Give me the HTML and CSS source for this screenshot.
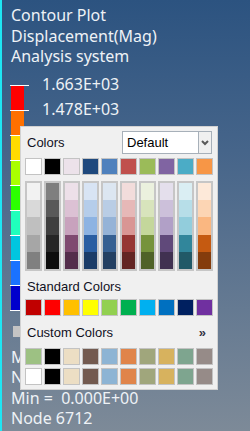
FILE: index.html
```html
<!DOCTYPE html>
<html>
<head>
<meta charset="utf-8">
<link rel="stylesheet" href="styles.css">
</head>
<body>
<div class="view">
  <div class="title">Contour Plot<br>Displacement(Mag)<br>Analysis system</div>
  <div class="legend">
    <div class="bar">
      <div class="seg"><i class="l1"></i></div>
      <div class="seg"><i class="l2"></i></div>
      <div class="seg"><i class="l3"></i></div>
      <div class="seg"><i class="l4"></i></div>
      <div class="seg"><i class="l5"></i></div>
      <div class="seg"><i class="l6"></i></div>
      <div class="seg"><i class="l7"></i></div>
      <div class="seg"><i class="l8"></i></div>
      <div class="seg"><i class="l9"></i></div>
    </div>
    <div class="labels">
      <div>1.663E+03</div>
      <div>1.478E+03</div>
      <div>1.294E+03</div>
      <div>1.109E+03</div>
      <div>9.240E+02</div>
      <div>7.392E+02</div>
      <div>5.544E+02</div>
      <div>3.696E+02</div>
      <div>1.848E+02</div>
      <div>0.000E+00</div>
    </div>
  </div>
  <div class="nores"></div>
  <div class="stats">
    <div>Max =  1.663E+03</div>
    <div>Node 1184</div>
    <div>Min =  0.000E+00</div>
    <div>Node 6712</div>
  </div>
</div>

<div class="popup">
  <div class="head">
    <span class="lbl">Colors</span>
    <div class="combo">
      <span class="val">Default</span>
      <span class="btn"><svg width="8" height="6" viewBox="0 0 8 6"><polyline points="1,1 4,4 7,1" fill="none" stroke="#5a5a5a" stroke-width="2"/></svg></span>
    </div>
  </div>
  <div class="row theme">
    <span class="sw" style="background:#ffffff"></span>
    <span class="sw" style="background:#000000"></span>
    <span class="sw" style="background:#ece2ea"></span>
    <span class="sw" style="background:#1f497d"></span>
    <span class="sw" style="background:#4f81bd"></span>
    <span class="sw" style="background:#c0504d"></span>
    <span class="sw" style="background:#9bbb59"></span>
    <span class="sw" style="background:#8064a2"></span>
    <span class="sw" style="background:#4bacc6"></span>
    <span class="sw" style="background:#f79646"></span>
  </div>
  <div class="row shades">
    <div class="col"><b style="background:#f2f2f2"></b><b style="background:#d9d9d9"></b><b style="background:#bfbfbf"></b><b style="background:#a6a6a6"></b><b style="background:#808080"></b></div>
    <div class="col"><b style="background:#7f7f7f"></b><b style="background:#595959"></b><b style="background:#3f3f3f"></b><b style="background:#262626"></b><b style="background:#0d0d0d"></b></div>
    <div class="col"><b style="background:#ede0e9"></b><b style="background:#dcc1d4"></b><b style="background:#c8a2bd"></b><b style="background:#7f4a70"></b><b style="background:#542d4b"></b></div>
    <div class="col"><b style="background:#d8e4f4"></b><b style="background:#b5cdea"></b><b style="background:#8db3e2"></b><b style="background:#2a5ea2"></b><b style="background:#1b3c68"></b></div>
    <div class="col"><b style="background:#dce6f1"></b><b style="background:#b9cde5"></b><b style="background:#95b3d7"></b><b style="background:#366092"></b><b style="background:#244062"></b></div>
    <div class="col"><b style="background:#f2dcdb"></b><b style="background:#e6b8b7"></b><b style="background:#d99694"></b><b style="background:#963634"></b><b style="background:#632523"></b></div>
    <div class="col"><b style="background:#ebf1de"></b><b style="background:#d8e4bc"></b><b style="background:#c4d79b"></b><b style="background:#76933c"></b><b style="background:#4f6228"></b></div>
    <div class="col"><b style="background:#e4dfec"></b><b style="background:#ccc0da"></b><b style="background:#b1a0c7"></b><b style="background:#60497a"></b><b style="background:#403151"></b></div>
    <div class="col"><b style="background:#daeef3"></b><b style="background:#b7dee8"></b><b style="background:#92cddc"></b><b style="background:#31869b"></b><b style="background:#215967"></b></div>
    <div class="col"><b style="background:#fde9d9"></b><b style="background:#fcd5b4"></b><b style="background:#fab781"></b><b style="background:#c55a11"></b><b style="background:#843c0c"></b></div>
  </div>
  <div class="lbl section">Standard Colors</div>
  <div class="row std">
    <span class="sw" style="background:#c00000"></span>
    <span class="sw" style="background:#ff0000"></span>
    <span class="sw" style="background:#ffc000"></span>
    <span class="sw" style="background:#ffff00"></span>
    <span class="sw" style="background:#92d050"></span>
    <span class="sw" style="background:#00b050"></span>
    <span class="sw" style="background:#00b0f0"></span>
    <span class="sw" style="background:#0070c0"></span>
    <span class="sw" style="background:#002060"></span>
    <span class="sw" style="background:#7030a0"></span>
  </div>
  <div class="custom-head">
    <span class="lbl">Custom Colors</span>
    <span class="more">»</span>
  </div>
  <div class="row custom">
    <span class="sw" style="background:#9dc183"></span>
    <span class="sw" style="background:#000000"></span>
    <span class="sw" style="background:#ecdec4"></span>
    <span class="sw" style="background:#735a4f"></span>
    <span class="sw" style="background:#8db4d4"></span>
    <span class="sw" style="background:#e0844a"></span>
    <span class="sw" style="background:#a0a67c"></span>
    <span class="sw" style="background:#d7b25e"></span>
    <span class="sw" style="background:#7ea58f"></span>
    <span class="sw" style="background:#968b88"></span>
  </div>
  <div class="row custom2">
    <span class="sw" style="background:#ffffff"></span>
    <span class="sw" style="background:#000000"></span>
    <span class="sw" style="background:#ecdec4"></span>
    <span class="sw" style="background:#735a4f"></span>
    <span class="sw" style="background:#8db4d4"></span>
    <span class="sw" style="background:#e0844a"></span>
    <span class="sw" style="background:#a0a67c"></span>
    <span class="sw" style="background:#d7b25e"></span>
    <span class="sw" style="background:#7ea58f"></span>
    <span class="sw" style="background:#968b88"></span>
  </div>
</div>
</body>
</html>
```

FILE: styles.css
```css
* { box-sizing: border-box; margin: 0; padding: 0; }

body {
  width: 250px;
  height: 431px;
  overflow: hidden;
  position: relative;
  background: linear-gradient(180deg, #2c5380 0%, #46658a 35%, #7d8a98 100%);
  border-left: 2px solid #1ee6f4;
  font-family: "Noto Sans", sans-serif;
  color: #eef2f6;
}

.view {
  padding: 5px 0 0 8px;
  font-size: 16px;
}

.title {
  padding-left: 1px;
  line-height: 20.5px;
}

.legend {
  display: flex;
  margin-top: 5.5px;
}

.bar {
  width: 19px;
  padding-top: 13px;
  display: flex;
  flex-direction: column;
}

.seg {
  height: 25px;
  border-top: 1px solid #ffffff;
  display: flex;
}

.seg:last-child {
  height: 26px;
  border-bottom: 1px solid #ffffff;
}

.seg i {
  display: block;
  width: 13px;
  margin-left: 1px;
}

.l1 { background: #ff0000; }
.l2 { background: #ff7000; }
.l3 { background: #ffdc00; }
.l4 { background: #aaff00; }
.l5 { background: #2cff00; }
.l6 { background: #20ffbc; }
.l7 { background: #00c6e0; }
.l8 { background: #1a72ff; }
.l9 { background: #0000cc; }

.labels {
  margin-left: 13px;
  line-height: 25px;
}

.nores {
  margin: 4px 0 0 3px;
  width: 13px;
  height: 11px;
  background: #c4c4c4;
}

.stats {
  margin-top: 10px;
  padding-left: 1px;
  line-height: 20.3px;
}

.stats div { white-space: pre; }

/* popup */
.popup {
  position: absolute;
  left: 18px;
  top: 126px;
  width: 198px;
  height: 264px;
  background: #f0f0f0;
  border: 1px solid #d2d2d2;
  padding: 4px;
  font-family: "Liberation Sans", Arial, sans-serif;
  font-size: 13px;
  color: #10101e;
}

.head {
  display: flex;
  align-items: center;
  justify-content: space-between;
  height: 23px;
}

.head .lbl { margin-left: 2px; }

.combo {
  width: 90px;
  height: 23px;
  margin-right: 1px;
  border: 1px solid #a7b0b9;
  background: #ffffff;
  display: flex;
}

.combo .val {
  flex: 1;
  padding-left: 4px;
  line-height: 21px;
  color: #000;
}

.combo .btn {
  width: 13px;
  border-left: 1px solid #a7b0b9;
  background: #f0f0f0;
  display: flex;
  align-items: center;
  justify-content: center;
}

.row {
  display: flex;
  gap: 2px;
}

.sw {
  display: block;
  width: 17px;
  height: 17px;
  border: 1px solid #c3c3c3;
}

.theme { margin-top: 4px; }

.shades { margin-top: 6px; }

.col {
  width: 17px;
  height: 90px;
  border: 2px solid #c6c6c6;
  display: flex;
  flex-direction: column;
}

.col b {
  display: block;
  flex: 1;
}

.section {
  margin-top: 8px;
  margin-left: 2px;
  line-height: 15px;
}

.std { margin-top: 5px; }

.custom-head {
  margin-top: 9px;
  display: flex;
  justify-content: space-between;
  line-height: 15px;
}

.custom-head .lbl { margin-left: 2px; }

.more {
  font-weight: bold;
  color: #333344;
  margin-right: 7px;
}

.custom { margin-top: 8px; }
.custom2 { margin-top: 3px; }
```
